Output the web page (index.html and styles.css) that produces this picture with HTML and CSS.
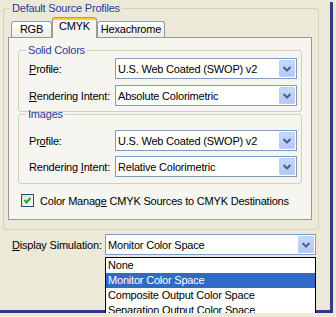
FILE: index.html
```html
<!DOCTYPE html>
<html lang="en">
<head>
    <meta charset="UTF-8">
    <title>Color Settings</title>
    <link rel="stylesheet" href="styles.css">
</head>
<body>
    <div class="window">
        <fieldset class="group source">
            <legend>Default Source Profiles</legend>
            <div class="tabs">
                <div class="tab">RGB</div>
                <div class="tab active">CMYK</div>
                <div class="tab">Hexachrome</div>
            </div>
            <div class="tab-panel">
                <fieldset class="group solid">
                    <legend>Solid Colors</legend>
                    <div class="row">
                        <label><u>P</u>rofile:</label>
                        <div class="combo"><span>U.S. Web Coated (SWOP) v2</span><span class="combo-btn"><svg width="16" height="17" viewBox="0 0 16 17"><path d="M4.5 7 L8 10.5 L11.5 7" fill="none" stroke="#4d6185" stroke-width="2"/></svg></span></div>
                    </div>
                    <div class="row">
                        <label><u>R</u>endering Intent:</label>
                        <div class="combo"><span>Absolute Colorimetric</span><span class="combo-btn"><svg width="16" height="17" viewBox="0 0 16 17"><path d="M4.5 7 L8 10.5 L11.5 7" fill="none" stroke="#4d6185" stroke-width="2"/></svg></span></div>
                    </div>
                </fieldset>
                <fieldset class="group images">
                    <legend>Images</legend>
                    <div class="row">
                        <label>Pr<u>o</u>file:</label>
                        <div class="combo"><span>U.S. Web Coated (SWOP) v2</span><span class="combo-btn"><svg width="16" height="17" viewBox="0 0 16 17"><path d="M4.5 7 L8 10.5 L11.5 7" fill="none" stroke="#4d6185" stroke-width="2"/></svg></span></div>
                    </div>
                    <div class="row">
                        <label>Rendering <u>I</u>ntent:</label>
                        <div class="combo"><span>Relative Colorimetric</span><span class="combo-btn"><svg width="16" height="17" viewBox="0 0 16 17"><path d="M4.5 7 L8 10.5 L11.5 7" fill="none" stroke="#4d6185" stroke-width="2"/></svg></span></div>
                    </div>
                </fieldset>
                <div class="check-row">
                    <span class="checkbox"><svg width="11" height="11" viewBox="0 0 11 11"><path d="M2.5 5 L4.5 7.5 L8.5 3" fill="none" stroke="#21a121" stroke-width="2"/></svg></span>
                    <span>Color Manag<u>e</u> CMYK Sources to CMYK Destinations</span>
                </div>
            </div>
        </fieldset>

        <div class="row display-row">
            <label><u>D</u>isplay Simulation:</label>
            <div class="combo wide"><span>Monitor Color Space</span><span class="combo-btn"><svg width="16" height="17" viewBox="0 0 16 17"><path d="M4.5 7 L8 10.5 L11.5 7" fill="none" stroke="#4d6185" stroke-width="2"/></svg></span></div>
        </div>

        <ul class="dropdown">
            <li>None</li>
            <li class="selected">Monitor Color Space</li>
            <li>Composite Output Color Space</li>
            <li>Separation Output Color Space</li>
        </ul>
    </div>
</body>
</html>
```

FILE: styles.css
```css
body {
    margin: 0;
    background-color: #ece9d8;
    font-family: "Liberation Sans", Arial, sans-serif;
    font-size: 11px;
    letter-spacing: -0.2px;
    color: #000;
    overflow: hidden;
}

.window {
    position: relative;
    box-sizing: border-box;
    width: 333px;
    height: 311px;
    border-right: 3px solid #323a86;
    border-bottom: 3px solid #323a86;
}

.group {
    border: 1px solid #d0d0bf;
    border-radius: 3px;
    min-width: 0;
}

.group legend {
    color: #21409a;
    padding: 0 2px;
}

.source {
    box-sizing: border-box;
    width: 316px;
    height: 228px;
    margin: 2px 0 0 3px;
    padding: 2px 6px 0 4px;
}

.source > legend {
    line-height: 13px;
    margin-left: 2px;
}

.tabs {
    display: flex;
    align-items: flex-end;
    height: 20px;
    padding-left: 3px;
}

.tab {
    box-sizing: border-box;
    height: 16px;
    padding-top: 1px;
    line-height: 13px;
    text-align: center;
    border: 1px solid #919b9c;
    border-bottom: none;
    border-radius: 3px 3px 0 0;
    background: linear-gradient(#ffffff, #ecebe6);
}

.tab:nth-child(1) { width: 41px; }
.tab:nth-child(2) { width: 45px; }
.tab:nth-child(3) { width: 68px; }

.tab.active {
    position: relative;
    z-index: 1;
    height: 21px;
    margin-bottom: -1px;
    padding-top: 2px;
    border-top-color: #e68b2c;
    background: #f6f5f0;
    box-shadow: inset 0 2px #ffc73c;
}

.tab-panel {
    box-sizing: border-box;
    height: 183px;
    padding: 0 8px 0 9px;
    border: 1px solid #919b9c;
    background-color: #f6f5f0;
}

.tab-panel .group {
    box-sizing: border-box;
    width: 284px;
    margin: 0;
}

.tab-panel .group legend {
    line-height: 10px;
    margin-left: -3px;
}

.solid {
    margin-top: 7px !important;
    padding: 3px 0 5px 10px;
}

.images {
    margin-top: -3px !important;
    padding: 11px 0 6px 10px;
}

.row {
    display: flex;
    align-items: center;
    height: 21px;
}

.solid .row + .row {
    margin-top: 6px;
}

.images .row + .row {
    margin-top: 5px;
}

.row label {
    width: 86px;
}

.combo {
    box-sizing: border-box;
    display: flex;
    align-items: center;
    width: 182px;
    height: 21px;
    padding-left: 2px;
    border: 1px solid #7f9db9;
    background-color: #fff;
}

.combo-btn {
    display: flex;
    margin-left: auto;
    margin-right: 1px;
    width: 16px;
    height: 17px;
    border-radius: 2px;
    background: linear-gradient(#c9d8fc, #b3c7f5);
    box-shadow: inset 0 0 0 1px #bccdf6;
}

.check-row {
    display: flex;
    align-items: center;
    height: 13px;
    margin-top: 10px;
    padding-left: 3px;
}

.checkbox {
    box-sizing: border-box;
    display: flex;
    align-items: center;
    justify-content: center;
    width: 13px;
    height: 13px;
    margin-right: 6px;
    border: 1px solid #1c5180;
    background: linear-gradient(135deg, #dcdcd7, #ffffff);
}

.display-row {
    margin-top: 4px;
    padding-left: 12px;
}

.display-row label {
    width: 93px;
}

.combo.wide {
    width: 211px;
}

.dropdown {
    position: absolute;
    left: 105px;
    top: 255px;
    z-index: 2;
    box-sizing: border-box;
    width: 211px;
    margin: 0;
    padding: 0;
    list-style: none;
    border: 1px solid #000;
    background-color: #fff;
}

.dropdown li {
    height: 15px;
    line-height: 15px;
    padding-left: 2px;
}

.dropdown li.selected {
    background-color: #316ac5;
    color: #fff;
}
```
